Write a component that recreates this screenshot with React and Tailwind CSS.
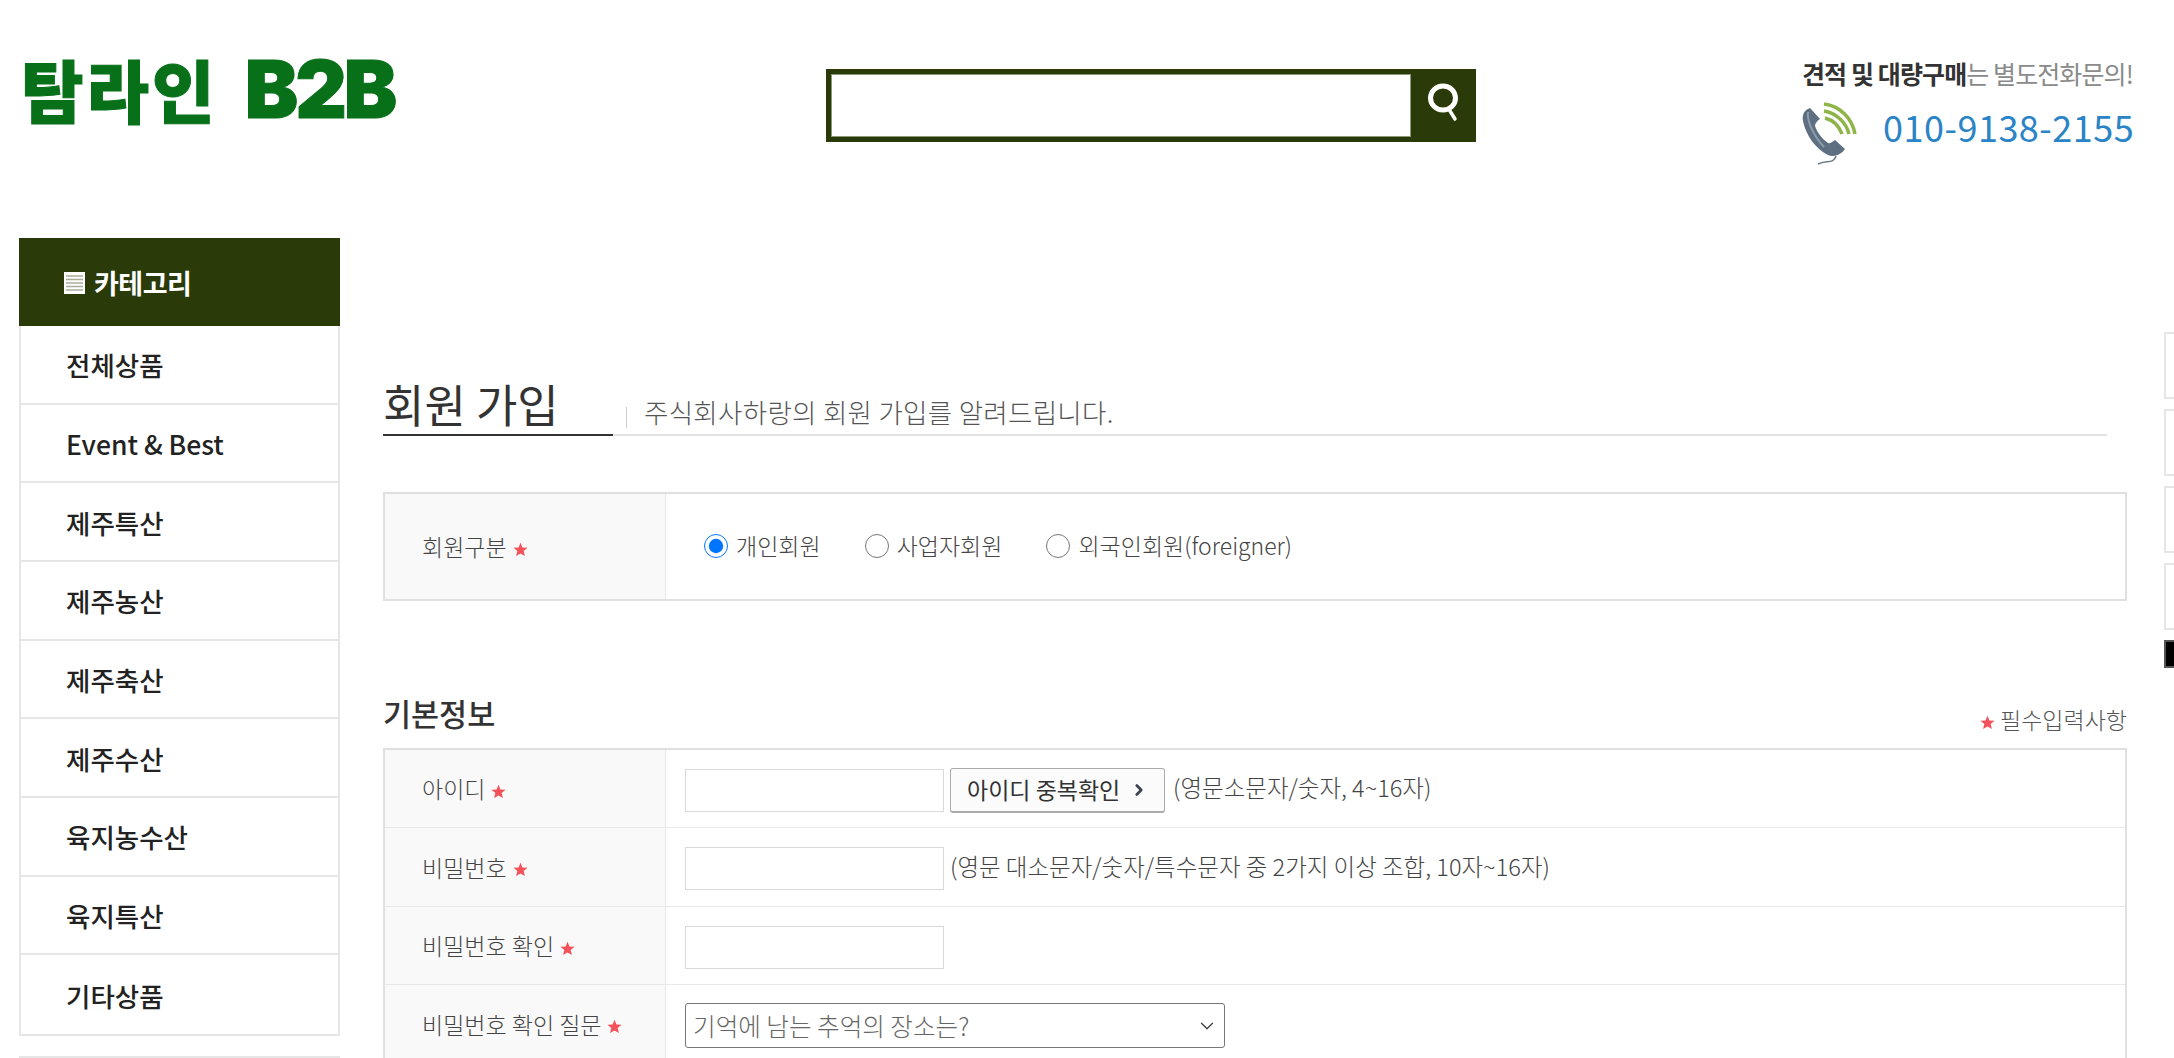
import React from 'react';
import { ChevronDown, ChevronRight } from 'lucide-react';

const categories = ['전체상품', 'Event & Best', '제주특산', '제주농산', '제주축산', '제주수산', '육지농수산', '육지특산', '기타상품'];

const Star = ({ className = '' }) => (
  <svg viewBox="0 0 20 20" className={`inline-block w-[15px] h-[15px] ${className}`}>
    <polygon fill="#f4525a" points="10,1 12.6,7.2 19.4,7.7 14.2,12 15.9,18.8 10,15.2 4.1,18.8 5.8,12 0.6,7.7 7.4,7.2" />
  </svg>
);

const SearchGlyph = () => (
  <svg viewBox="0 0 36 42" className="w-[36px] h-[42px]" fill="none" stroke="white" strokeLinecap="round">
    <ellipse cx="17" cy="17" rx="12.5" ry="12" strokeWidth="5" />
    <path d="M24 30 L29 38" strokeWidth="3.5" />
  </svg>
);

const PhoneGlyph = () => (
  <svg viewBox="0 0 56 64" className="w-[56px] h-[64px] shrink-0">
    <g fill="none" stroke="#8fb548" strokeWidth="3.5">
      <path d="M22 2 C38 4 50 16 53 32" />
      <path d="M22 9 C34 11 44 20 47 32" />
      <path d="M23 16 C31 18 37 24 40 32" />
    </g>
    <path d="M8 6 C2 8 0 13 1 19 C4 34 14 47 26 53 C31 55 38 54 43 47 L33 38 C30 40 28 42 26 41 C20 37 15 30 13 24 C13 21 15 19 18 17 Z" fill="#5d6f80" />
    <path d="M6 10 C5 18 10 32 22 45" fill="none" stroke="#8d9cab" strokeWidth="2" />
    <path d="M34 54 C32 62 24 58 16 62" fill="none" stroke="#6b7a88" strokeWidth="1.5" />
  </svg>
);

const Label = ({ text }) => (
  <div className="w-[281px] shrink-0 bg-[#f9f9f9] border-r border-[#e8e8e8] pl-[37px] flex items-center gap-[6px] text-[23px] text-[#444] font-light">
    <span>{text}</span>
    <Star className="mt-[5px]" />
  </div>
);

const Radio = ({ label, checked, className = '' }) => (
  <label className={`flex items-center gap-[8px] ${className}`}>
    <input type="radio" name="memberType" defaultChecked={checked} className="w-6 h-6 m-0 accent-[#0075ff]" />
    <span>{label}</span>
  </label>
);

const TextBox = () => <input type="text" className="w-[259px] h-[43px] border border-[#d9d9d9] bg-white shrink-0" />;

const Row = ({ label, children, height = 'h-[79px]' }) => (
  <div className={`flex ${height} border-b border-[#e8e8e8]`}>
    <Label text={label} />
    <div className="flex-1 flex items-center pl-[19px] pt-[3px] text-[23.5px] text-[#444] font-light">{children}</div>
  </div>
);

export default function App() {
  return (
    <div className="relative h-[1058px] overflow-hidden bg-white font-['Noto_Sans_CJK_KR','Noto_Sans',sans-serif]">
      {/* header */}
      <header className="flex h-[238px] items-start">
        <div className="w-[826px] pl-[21px] pt-[45px] whitespace-nowrap flex items-baseline font-black text-[#077019] [-webkit-text-stroke:1px_#077019]">
          <span className="text-[68px] leading-[88px] tracking-[3px]">탐라인</span>
          <span className="ml-[27px] text-[80px] leading-[88px] tracking-[-3px] font-['Inter',sans-serif]">B2B</span>
        </div>
        <div className="flex w-[650px] h-[73px] mt-[69px] bg-[#2a3a08] pl-[5px] py-[5px]">
          <input type="text" className="w-[580px] h-[63px] bg-white border border-[#8a9a78]" />
          <button className="flex-1 flex items-center justify-center pb-[8px]"><SearchGlyph /></button>
        </div>
        <div className="ml-[326px] mt-[58px] w-[340px]">
          <div className="text-[25px] leading-[30px] whitespace-nowrap tracking-[-0.9px] text-[#8a8a8a]">
            <span className="font-bold text-[#333]">견적 및 대량구매</span>는 별도전화문의!
          </div>
          <div className="flex items-center mt-[14px]">
            <PhoneGlyph />
            <span className="ml-[25px] pb-[16px] text-[36px] leading-[40px] text-[#2a84c6] tracking-[0.5px]">010-9138-2155</span>
          </div>
        </div>
      </header>

      <div className="flex items-start">
        {/* sidebar */}
        <aside className="ml-[19px] w-[321px] shrink-0">
          <div className="flex items-center h-[88px] bg-[#2a3a08] pl-[45px] pt-[2px] gap-[9px] text-white text-[27px] font-bold tracking-[-0.5px]">
            <svg viewBox="0 0 21 22" className="w-[21px] h-[22px]">
              <rect width="21" height="22" fill="#fff" />
              <path d="M2 4H19M2 7.5H19M2 11H19M2 14.5H19M2 18H19" stroke="#a9ad9a" strokeWidth="1.5" />
            </svg>
            <span>카테고리</span>
          </div>
          <ul className="border-x-2 border-b-2 border-[#e6e6e6]">
            {categories.map((name, i) => (
              <li
                key={name}
                className={`flex items-center h-[78.67px] pl-[45px] pt-[2px] text-[26.5px] font-medium text-[#222] ${i < categories.length - 1 ? 'border-b-2 border-[#e6e6e6]' : ''}`}
              >
                {name}
              </li>
            ))}
          </ul>
          <div className="mt-[20px] h-[60px] border-2 border-[#e6e6e6]" />
        </aside>

        {/* main */}
        <main className="ml-[43px] w-[1744px] shrink-0">
          <div className="flex items-end h-[198px] relative">
            <div className="w-[230px] border-b-2 border-[#333] h-[52px] text-[45px] leading-[40px] text-[#333] whitespace-nowrap">회원 가입</div>
            <div className="flex-1 flex items-end h-[52px] border-b-2 border-[#e2e2e2] mr-[20px] pl-[13px]">
              <span className="w-[1px] h-[21px] bg-[#ccc] mb-[6px]" />
              <span className="ml-[17px] pb-[3px] text-[26.5px] leading-[38px] text-[#555] font-light tracking-[0.3px]">주식회사하랑의 회원 가입를 알려드립니다.</span>
            </div>
          </div>

          <section className="flex h-[109px] mt-[56px] border-2 border-[#e0e0e0]">
            <Label text="회원구분" />
            <div className="flex-1 flex items-center pl-[38px] pb-[2px] text-[23px] text-[#444] font-light">
              <Radio label="개인회원" checked />
              <Radio label="사업자회원" className="ml-[44px]" />
              <Radio label="외국인회원(foreigner)" className="ml-[44px]" />
            </div>
          </section>

          <div className="flex justify-between items-end h-[58px] mt-[88px] mb-[1px] pb-[14px]">
            <h2 className="text-[30.5px] leading-[40px] font-medium text-[#333]">기본정보</h2>
            <div className="flex items-center gap-[5px] text-[23px] leading-[28px] text-[#555] font-light">
              <Star className="mt-[6px]" />
              <span>필수입력사항</span>
            </div>
          </div>

          <section className="border-x-2 border-t-2 border-[#e0e0e0]">
            <Row label="아이디" height="h-[78px]">
              <TextBox />
              <button className="flex items-center justify-between ml-[6px] w-[215px] h-[45px] px-[16px] border border-[#aaa] border-b-2 rounded-[3px] bg-[#fbfbfb] text-[23px] font-normal text-[#333]">
                <span>아이디 중복확인</span>
                <ChevronRight size={18} strokeWidth={3.5} className="text-[#3a4250]" />
              </button>
              <span className="ml-[8px] pb-[5px]">(영문소문자/숫자, 4~16자)</span>
            </Row>
            <Row label="비밀번호">
              <TextBox />
              <span className="ml-[6px] pb-[3px]">(영문 대소문자/숫자/특수문자 중 2가지 이상 조합, 10자~16자)</span>
            </Row>
            <Row label="비밀번호 확인" height="h-[78px]">
              <TextBox />
            </Row>
            <Row label="비밀번호 확인 질문">
              <div className="relative w-[540px] h-[45px]">
                <select className="w-full h-full appearance-none border border-[#767676] rounded-[3px] bg-white pl-[7px] text-[24.6px] text-[#666] font-light">
                  <option>기억에 남는 추억의 장소는?</option>
                </select>
                <ChevronDown size={22} strokeWidth={1.5} className="absolute right-[7px] top-[12px] text-[#444]" />
              </div>
            </Row>
          </section>
        </main>
      </div>

      {/* floating side buttons */}
      <div className="absolute left-[2164px] top-[332px] w-[10px] flex flex-col gap-[10px]">
        <div className="h-[67px] border-2 border-r-0 border-[#e6e6e6]" />
        <div className="h-[67px] border-2 border-r-0 border-[#e6e6e6]" />
        <div className="h-[67px] border-2 border-r-0 border-[#e6e6e6]" />
        <div className="h-[67px] border-2 border-r-0 border-[#e6e6e6]" />
        <div className="h-[28px] bg-black border-2 border-r-0 border-[#555]" />
      </div>
    </div>
  );
}
